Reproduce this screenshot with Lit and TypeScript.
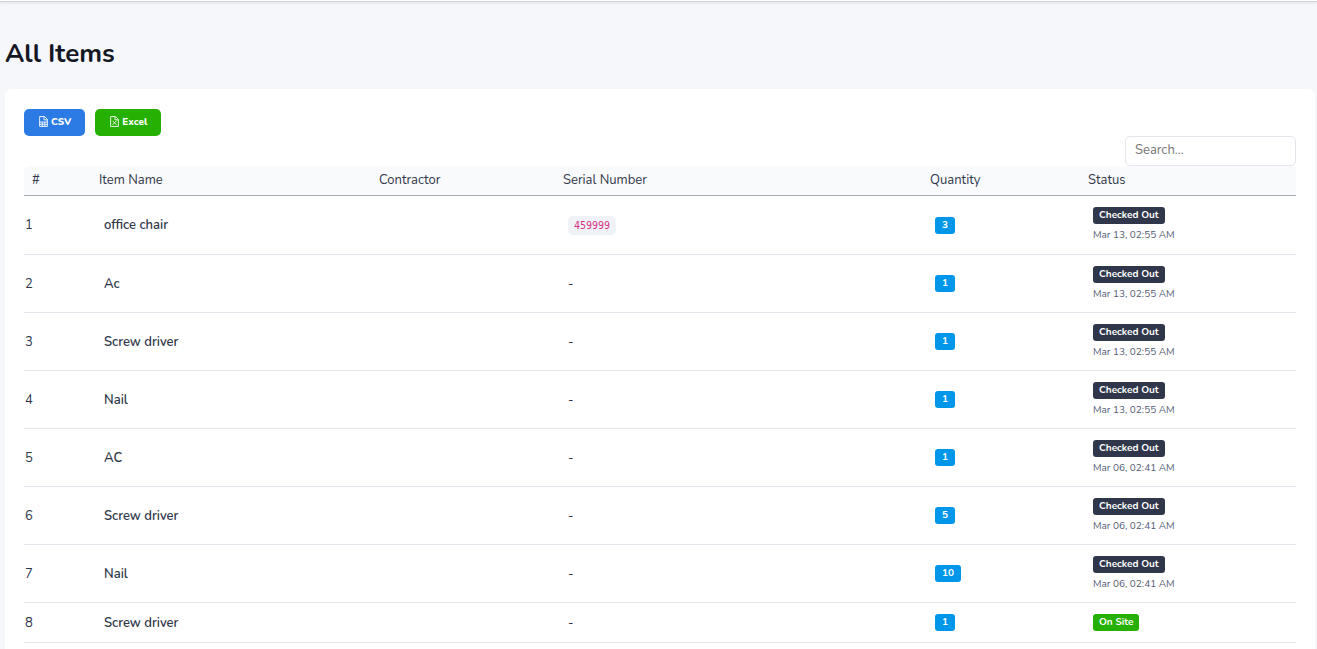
import { LitElement, html, css, svg, nothing } from "lit";
import { customElement, state } from "lit/decorators.js";

interface Item {
  name: string;
  contractor: string;
  serial: string;
  quantity: number;
  checkedOut: string;
}

const ITEMS: Item[] = [
  { name: "office chair", contractor: "", serial: "459999", quantity: 3, checkedOut: "Mar 13, 02:55 AM" },
  { name: "Ac", contractor: "", serial: "", quantity: 1, checkedOut: "Mar 13, 02:55 AM" },
  { name: "Screw driver", contractor: "", serial: "", quantity: 1, checkedOut: "Mar 13, 02:55 AM" },
  { name: "Nail", contractor: "", serial: "", quantity: 1, checkedOut: "Mar 13, 02:55 AM" },
  { name: "AC", contractor: "", serial: "", quantity: 1, checkedOut: "Mar 06, 02:41 AM" },
  { name: "Screw driver", contractor: "", serial: "", quantity: 5, checkedOut: "Mar 06, 02:41 AM" },
  { name: "Nail", contractor: "", serial: "", quantity: 10, checkedOut: "Mar 06, 02:41 AM" },
  { name: "Screw driver", contractor: "", serial: "", quantity: 1, checkedOut: "" },
];

const fileOutline = svg`<path d="M1.5.5h4.5l2.5 2.5v6.5h-7z M5.5.5v3h3" />`;

const csvIcon = html`<svg class="icon" viewBox="0 0 10 10" aria-hidden="true">
  ${fileOutline}
  <path d="M1.5 5.5h7M1.5 7.5h7M3.9 5.5v4M6.2 5.5v4" />
</svg>`;

const excelIcon = html`<svg class="icon" viewBox="0 0 10 10" aria-hidden="true">
  ${fileOutline}
  <path d="M3.3 4.4l3.4 3.6M6.7 4.4l-3.4 3.6" />
</svg>`;

@customElement("app-root")
export class AppRoot extends LitElement {
  @state() private query = "";

  static styles = css`
    :host {
      display: flex;
      flex-direction: column;
      box-sizing: border-box;
      min-height: 100vh;
      background: #f5f7fa;
      color: #31374a;
      font-family: Nunito, "Open Sans", sans-serif;
      font-size: 13px;
      line-height: 20px;
    }
    .topbar {
      height: 1px;
      border-bottom: 1px solid #cbd0dd;
      background: #fff;
      box-shadow: 0 1px 3px rgba(40, 50, 80, 0.12);
    }
    .title {
      margin: 0;
      padding: 36px 5px 19px;
      font-size: 26px;
      line-height: 32px;
      font-weight: 700;
      color: #141824;
    }
    .card {
      flex: 1;
      display: flex;
      flex-direction: column;
      margin: 0 2px 0 5px;
      padding: 20px 19px 0;
      background: #fff;
      border-radius: 6px 6px 0 0;
    }
    .actions {
      display: flex;
      gap: 10px;
    }
    .button {
      display: flex;
      align-items: center;
      gap: 2px;
      height: 27px;
      padding: 0 14px 2px;
      border: 0;
      border-radius: 5px;
      color: #fff;
      font: inherit;
      font-size: 10px;
      font-weight: 800;
      cursor: pointer;
    }
    .csv {
      background: #2c7be5;
    }
    .excel {
      background: #25b003;
    }
    .icon {
      width: 11px;
      height: 11px;
      fill: none;
      stroke: currentColor;
      stroke-width: 0.8;
    }
    .search {
      align-self: flex-end;
      box-sizing: border-box;
      width: 171px;
      height: 30px;
      padding: 0 9px 2px;
      border: 1px solid #e3e6ed;
      border-radius: 5px;
      background: #fff;
      color: inherit;
      font: inherit;
    }
    .search::placeholder {
      color: #757575;
      opacity: 1;
    }
    .items {
      width: 100%;
      table-layout: fixed;
      border-collapse: separate;
      border-spacing: 0;
    }
    .col-index { width: 67px; }
    .col-name { width: 280px; }
    .col-contractor { width: 184px; }
    .col-serial { width: 367px; }
    .col-quantity { width: 158px; }
    .col-status { width: 216px; }
    .items th {
      box-sizing: border-box;
      height: 30px;
      padding: 0 8px 2px;
      border-bottom: 1px solid #a9adb5;
      background: #f9fafc;
      font-weight: 400;
      text-align: left;
    }
    .items th:first-child {
      border-top-left-radius: 6px;
    }
    .items th:last-child {
      border-top-right-radius: 6px;
    }
    .items td {
      box-sizing: border-box;
      height: 40px;
      padding: 0 13px;
      border-bottom: 1px solid #e3e6ed;
    }
    .items .out td {
      height: 58px;
    }
    .items tbody tr:first-child td {
      height: 59px;
    }
    .items td.index {
      padding-left: 1px;
      padding-right: 1px;
    }
    .name {
      font-weight: 600;
    }
    .serial {
      display: block;
      width: fit-content;
      padding: 0 6px;
      border-radius: 5px;
      background: #eff2f6;
      color: #d63384;
      font-family: "DejaVu Sans Mono", monospace;
      font-size: 10px;
      line-height: 19px;
    }
    .badge {
      display: block;
      width: fit-content;
      padding: 0 6px;
      border-radius: 3px;
      color: #fff;
      font-size: 10px;
      line-height: 17px;
      font-weight: 700;
    }
    .amount {
      padding: 0 7px;
      background: #0097eb;
    }
    .dark {
      background: #31374a;
    }
    .site {
      background: #25b003;
    }
    .when {
      display: block;
      padding-top: 3px;
      font-size: 10px;
      line-height: 16px;
      color: #525b75;
    }
  `;

  private onSearch(event: Event) {
    this.query = (event.target as HTMLInputElement).value.toLowerCase();
  }

  private renderRow(item: Item, index: number) {
    return html`<tr class=${item.checkedOut ? "out" : "in"}>
      <td class="index">${index + 1}</td>
      <td class="name">${item.name}</td>
      <td>${item.contractor}</td>
      <td>${item.serial ? html`<code class="serial">${item.serial}</code>` : "-"}</td>
      <td><span class="badge amount">${item.quantity}</span></td>
      <td>
        <span class="badge ${item.checkedOut ? "dark" : "site"}">${item.checkedOut ? "Checked Out" : "On Site"}</span>
        ${item.checkedOut ? html`<span class="when">${item.checkedOut}</span>` : nothing}
      </td>
    </tr>`;
  }

  render() {
    const items = ITEMS.filter((item) => item.name.toLowerCase().includes(this.query));
    return html`
      <div class="topbar"></div>
      <h1 class="title">All Items</h1>
      <main class="card">
        <div class="actions">
          <button class="button csv" type="button">${csvIcon}CSV</button>
          <button class="button excel" type="button">${excelIcon}Excel</button>
        </div>
        <input class="search" type="search" aria-label="Search items" placeholder="Search..." @input=${this.onSearch} />
        <table class="items">
          <colgroup>
            <col class="col-index" />
            <col class="col-name" />
            <col class="col-contractor" />
            <col class="col-serial" />
            <col class="col-quantity" />
            <col class="col-status" />
          </colgroup>
          <thead>
            <tr>
              <th scope="col">#</th>
              <th scope="col">Item Name</th>
              <th scope="col">Contractor</th>
              <th scope="col">Serial Number</th>
              <th scope="col">Quantity</th>
              <th scope="col">Status</th>
            </tr>
          </thead>
          <tbody>
            ${items.map((item, index) => this.renderRow(item, index))}
          </tbody>
        </table>
      </main>
    `;
  }
}
